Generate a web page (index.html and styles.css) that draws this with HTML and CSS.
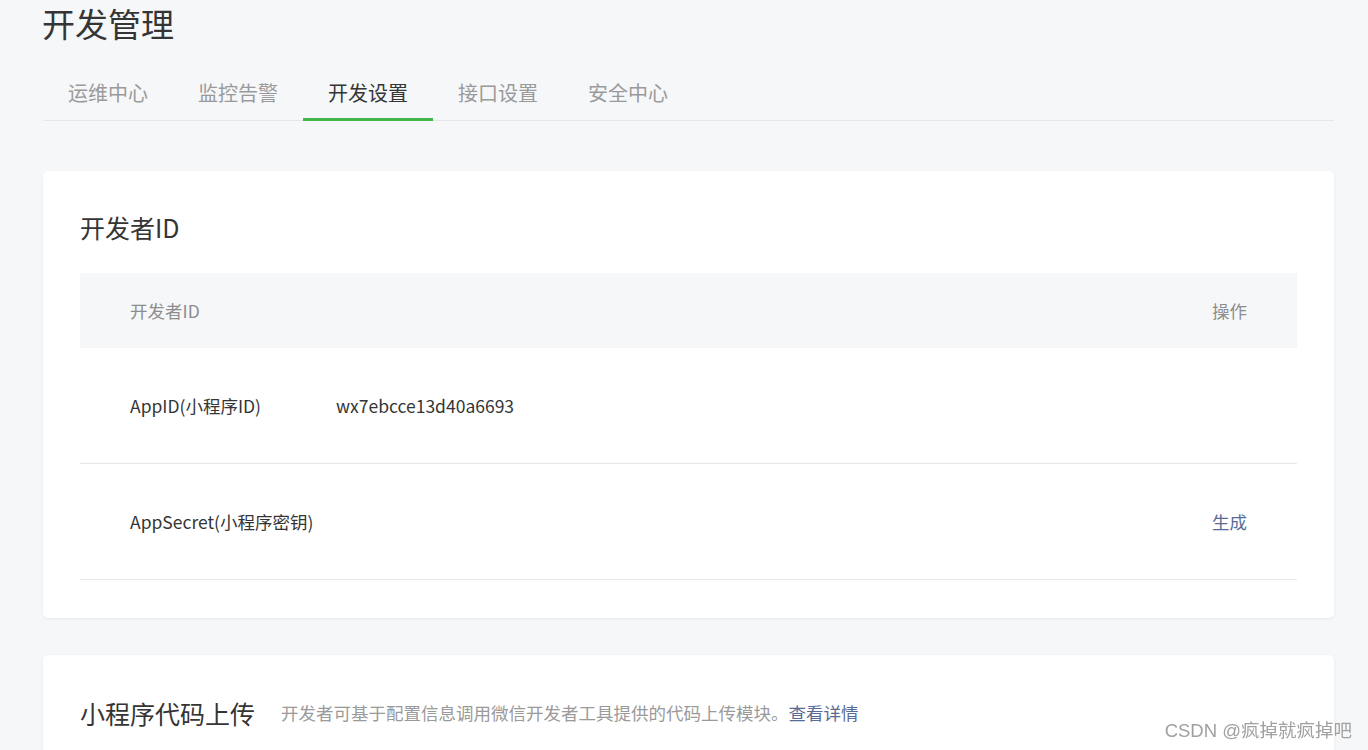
FILE: index.html
```html
<!DOCTYPE html>
<html lang="zh-CN">
<head>
<meta charset="utf-8">
<title>开发管理</title>
<link rel="stylesheet" href="styles.css">
</head>
<body>
<div class="page">
  <h1 class="page-title">开发管理</h1>
  <nav class="tabs">
    <a class="tab">运维中心</a>
    <a class="tab">监控告警</a>
    <a class="tab active">开发设置</a>
    <a class="tab">接口设置</a>
    <a class="tab">安全中心</a>
  </nav>

  <section class="card">
    <h2 class="card-title">开发者ID</h2>
    <div class="table">
      <div class="row head">
        <span class="col-name">开发者ID</span>
        <span class="col-op">操作</span>
      </div>
      <div class="row">
        <span class="col-name">AppID(小程序ID)</span>
        <span class="col-value">wx7ebcce13d40a6693</span>
        <span class="col-op"></span>
      </div>
      <div class="row">
        <span class="col-name">AppSecret(小程序密钥)</span>
        <span class="col-value"></span>
        <a class="col-op link">生成</a>
      </div>
    </div>
  </section>

  <section class="card upload">
    <h2 class="card-title">小程序代码上传<span class="card-desc">开发者可基于配置信息调用微信开发者工具提供的代码上传模块。<a class="link">查看详情</a></span></h2>
  </section>
</div>
<div class="watermark">CSDN @疯掉就疯掉吧</div>
</body>
</html>
```

FILE: styles.css
```css
html, body {
  margin: 0;
  padding: 0;
  background: #f6f7f9;
  font-family: "Noto Sans CJK SC", "Noto Sans", sans-serif;
  color: #353535;
  overflow: hidden;
}

.page {
  margin: 0 34px 0 42px;
}

.page-title {
  margin: 0;
  font-size: 33px;
  line-height: 46px;
  font-weight: 400;
  color: #353535;
}

.tabs {
  display: flex;
  margin-top: 22px;
  margin-left: 1px;
  border-bottom: 1px solid #e7e7eb;
  height: 52px;
}

.tab {
  display: block;
  width: 130px;
  text-align: center;
  font-size: 20px;
  line-height: 50px;
  color: #9a9a9a;
  border-bottom: 3px solid transparent;
  height: 53px;
  box-sizing: border-box;
}

.tab.active {
  color: #353535;
  border-bottom-color: #44b549;
}

.card {
  margin-top: 50px;
  margin-left: 1px;
  background: #fff;
  border-radius: 5px;
  box-shadow: 0 1px 3px rgba(0, 0, 0, 0.06);
  padding: 39px 37px 38px;
}

.card.upload {
  margin-top: 37px;
  padding-top: 41px;
}

.card-title {
  margin: 0;
  font-size: 25px;
  line-height: 34px;
  font-weight: 400;
  color: #353535;
  display: flex;
  align-items: center;
}

.card-desc {
  font-size: 17.5px;
  color: #9a9a9a;
  margin-left: 26px;
}

.table {
  margin-top: 29px;
  font-size: 17.5px;
}

.row {
  display: flex;
  align-items: center;
  height: 115px;
  padding: 0 50px;
  border-bottom: 1px solid #e7e7eb;
}

.row.head {
  height: 75px;
  background: #f6f7f9;
  border-bottom: 0;
  color: #8d8d8d;
}

.col-name {
  width: 206px;
}

.col-value {
  flex: 1;
}

.head .col-name {
  flex: 1;
}

.col-op {
  width: 36px;
  text-align: right;
  white-space: nowrap;
}

.link {
  color: #576b95;
  text-decoration: none;
}

.watermark {
  position: fixed;
  right: 16px;
  bottom: 6px;
  font-family: "Liberation Sans", "Noto Sans CJK SC", sans-serif;
  font-size: 18.5px;
  line-height: 26px;
  color: #a0a0a0;
  text-shadow: 0 0 1px rgba(255, 255, 255, 0.8);
}
```
